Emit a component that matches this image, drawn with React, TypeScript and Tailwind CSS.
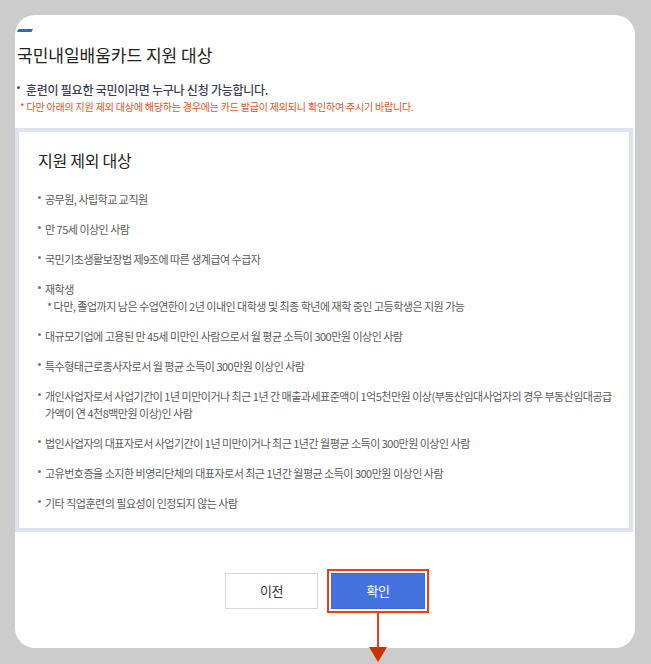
import React from "react";

const items: { text: string; sub?: string }[] = [
  { text: "공무원, 사립학교 교직원" },
  { text: "만 75세 이상인 사람" },
  { text: "국민기초생활보장법 제9조에 따른 생계급여 수급자" },
  {
    text: "재학생",
    sub: "* 다만, 졸업까지 남은 수업연한이 2년 이내인 대학생 및 최종 학년에 재학 중인 고등학생은 지원 가능",
  },
  { text: "대규모기업에 고용된 만 45세 미만인 사람으로서 월 평균 소득이 300만원 이상인 사람" },
  { text: "특수형태근로종사자로서 월 평균 소득이 300만원 이상인 사람" },
  {
    text: "개인사업자로서 사업기간이 1년 미만이거나 최근 1년 간 매출과세표준액이 1억5천만원 이상(부동산임대사업자의 경우 부동산임대공급가액이 연 4천8백만원 이상)인 사람",
  },
  { text: "법인사업자의 대표자로서 사업기간이 1년 미만이거나 최근 1년간 월평균 소득이 300만원 이상인 사람" },
  { text: "고유번호증을 소지한 비영리단체의 대표자로서 최근 1년간 월평균 소득이 300만원 이상인 사람" },
  { text: "기타 직업훈련의 필요성이 인정되지 않는 사람" },
];

export default function App() {
  return (
    <div className="h-[664px] w-[651px] overflow-hidden bg-[#cccccc] pt-[15px] pl-[15px] font-['Noto_Sans_CJK_KR','Noto_Sans',sans-serif]">
      <div className="relative flex h-[633px] w-[620px] flex-col rounded-[20px] bg-white pt-[14px]">
        <svg width="16" height="3" viewBox="0 0 16 3" className="ml-[2px] block">
          <polygon points="1.5,0 16,0 14.5,3 0,3" fill="#3563d9" />
        </svg>
        <h1 className="mt-[10px] ml-[2px] text-[17px] leading-[26px] font-normal text-[#222]">
          국민내일배움카드 지원 대상
        </h1>
        <div className="mt-[13px] flex items-start text-[12px] leading-[18px] font-medium tracking-[-0.25px] text-[#3b3d52]">
          <span className="mt-[5px] mr-[6px] ml-[2px] block h-[3px] w-[3px] rounded-full bg-[#555]" />
          <span>훈련이 필요한 국민이라면 누구나 신청 가능합니다.</span>
        </div>
        <p className="mt-[1px] ml-[5px] text-[10px] leading-[14px] tracking-[-0.2px] text-[#e2551d]">
          * 다만 아래의 지원 제외 대상에 해당하는 경우에는 카드 발급이 제외되니 확인하여 주시기 바랍니다.
        </p>
        <div className="mt-[14px] mr-[2px] border-[4px] border-[#dde3ee] pt-[16px] pr-[16px] pb-[16.5px] pl-[19px]">
          <h2 className="text-[16px] leading-[24px] font-normal tracking-[-0.25px] text-[#222]">
            지원 제외 대상
          </h2>
          <ul className="mt-[18.5px] flex flex-col gap-[13px]">
            {items.map((it, i) => (
              <li key={i} className="flex items-start text-[11px] leading-[17px] tracking-[-0.5px] text-[#5a5a5a]">
                <span className="mt-[5px] mr-[4px] block h-[3px] w-[3px] shrink-0 rounded-full bg-[#777]" />
                <div>
                  <div>{it.text}</div>
                  {it.sub && <div className="pl-[2px]">{it.sub}</div>}
                </div>
              </li>
            ))}
          </ul>
        </div>
        <div className="mt-[41px] flex justify-center gap-[13px]">
          <button className="h-[36px] w-[93px] border border-[#d8d8d8] bg-white text-[13px] tracking-[-0.5px] text-[#333]">
            이전
          </button>
          <div className="relative">
            <button className="h-[36px] w-[94px] border border-[#3a66d6] bg-[#4472de] text-[13px] tracking-[-0.5px] text-white">
              확인
            </button>
            <div className="pointer-events-none absolute -inset-[4px] border-2 border-[#ef3d1c]" />
            <div className="pointer-events-none absolute top-[calc(100%+4px)] left-1/2 h-[36px] w-[2px] -translate-x-1/2 bg-[#ef3d1c]" />
            <svg
              width="18"
              height="15"
              viewBox="0 0 18 15"
              className="pointer-events-none absolute top-[calc(100%+38px)] left-1/2 -translate-x-1/2"
            >
              <polygon points="0,0 18,0 9,15" fill="#cc3300" />
            </svg>
          </div>
        </div>
      </div>
    </div>
  );
}
